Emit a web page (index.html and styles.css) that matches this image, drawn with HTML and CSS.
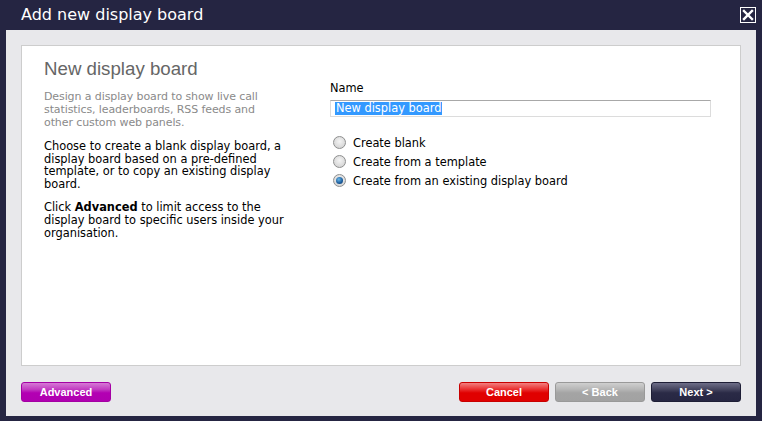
FILE: index.html
```html
<!DOCTYPE html>
<html>
<head>
<meta charset="utf-8">
<link rel="stylesheet" href="styles.css">
</head>
<body>
<div class="dialog">
  <div class="titlebar">
    <span class="title">Add new display board</span>
    <span class="close"><svg width="14" height="14" viewBox="0 0 14 14"><path d="M3 3 L11 11 M11 3 L3 11" stroke="#fff" stroke-width="2.4" stroke-linecap="square"/></svg></span>
  </div>
  <div class="body">
    <div class="panel">
      <div class="left">
        <h1 class="heading">New display board</h1>
        <p class="desc">Design a display board to show live call statistics, leaderboards, RSS feeds and other custom web panels.</p>
        <p class="text">Choose to create a blank display board, a display board based on a pre-defined template, or to copy an existing display board.</p>
        <p class="text">Click <strong class="strong">Advanced</strong> to limit access to the display board to specific users inside your organisation.</p>
      </div>
      <div class="right">
        <div class="label">Name</div>
        <div class="input"><span class="sel">New display board</span></div>
        <div class="radios">
          <div class="radio-row"><span class="radio"></span><span>Create blank</span></div>
          <div class="radio-row"><span class="radio"></span><span>Create from a template</span></div>
          <div class="radio-row"><span class="radio checked"></span><span>Create from an existing display board</span></div>
        </div>
      </div>
    </div>
    <div class="buttons">
      <span class="btn advanced">Advanced</span>
      <div class="btn-group">
        <span class="btn cancel">Cancel</span>
        <span class="btn back">&lt; Back</span>
        <span class="btn next">Next &gt;</span>
      </div>
    </div>
  </div>
</div>
</body>
</html>
```

FILE: styles.css
```css
html, body {
  margin: 0;
  padding: 0;
  background: #252542;
}
.dialog {
  width: 762px;
  height: 421px;
  display: flex;
  flex-direction: column;
  font-family: "DejaVu Sans", Verdana, sans-serif;
}
.titlebar {
  height: 30px;
  display: flex;
  align-items: center;
  justify-content: space-between;
  padding: 0 6px 0 21px;
}
.title {
  color: #fff;
  font-size: 16px;
  line-height: 30px;
}
.close {
  width: 14px;
  height: 14px;
  border: 1px solid #fff;
  display: flex;
  margin-top: -1px;
}
.body {
  margin: 0 6px;
  height: 386px;
  background: #e8e8eb;
  padding: 15px 15px 0 15px;
  box-sizing: border-box;
}
.panel {
  height: 321px;
  box-sizing: border-box;
  background: #fff;
  border: 1px solid #cdcdcd;
  display: flex;
  padding: 12px 29px 0 22px;
}
.left {
  width: 258px;
}
.heading {
  margin: 0;
  font-family: "Liberation Sans", Arial, sans-serif;
  font-weight: normal;
  font-size: 18.7px;
  line-height: 22px;
  color: #666;
}
.desc {
  width: 232px;
  font-size: 11px;
  letter-spacing: -0.1px;
  line-height: 13px;
  color: #8a8a8a;
  margin: 10px 0 0 0;
}
.text {
  font-size: 11.4px;
  line-height: 12.6px;
  color: #000;
  margin: 11px 0 0 0;
}
.strong {
  font-weight: bold;
}
.right {
  margin-left: 28px;
  flex: 1;
  padding-top: 24px;
  font-size: 11.4px;
  color: #000;
}
.label {
  line-height: 13px;
}
.input {
  margin-top: 5px;
  height: 17px;
  box-sizing: border-box;
  border: 1px solid #dcdcdc;
  border-top-color: #a8a8a8;
  padding: 1px 0 0 5px;
  line-height: 13px;
}
.sel {
  background: #3399ff;
  color: #fff;
  display: inline-block;
  line-height: 13px;
  padding: 0 1px;
  margin-left: -1px;
}
.radios {
  margin-top: 16px;
}
.radio-row {
  display: flex;
  align-items: center;
  height: 19px;
  gap: 7px;
  padding-left: 3px;
}
.radio {
  width: 13px;
  height: 13px;
  box-sizing: border-box;
  border-radius: 50%;
  border: 1px solid #8e8f8f;
  background: radial-gradient(circle at 50% 40%, #f4f4f4 0%, #dcdcdc 60%, #cfcfcf 100%);
  display: flex;
  align-items: center;
  justify-content: center;
}
.radio.checked::after {
  content: "";
  width: 7px;
  height: 7px;
  border-radius: 50%;
  background: radial-gradient(circle at 40% 35%, #6ab8e8 0%, #1a5a9a 60%, #0c3460 100%);
}
.buttons {
  margin-top: 16px;
  display: flex;
  justify-content: space-between;
}
.btn-group {
  display: flex;
  gap: 6px;
}
.btn {
  width: 90px;
  height: 20px;
  box-sizing: border-box;
  border-radius: 3px;
  display: flex;
  align-items: center;
  justify-content: center;
  font-family: "Liberation Sans", Arial, sans-serif;
  font-weight: bold;
  font-size: 11px;
  color: #fff;
  border: 1px solid transparent;
}
.advanced {
  background: linear-gradient(#d57ad5 0%, #c23dc2 35%, #b300b3 55%, #b000b0 100%);
  border-color: #a400a4;
}
.cancel {
  background: linear-gradient(#f28080 0%, #ea3030 35%, #e00000 55%, #e00000 100%);
  border-color: #c80000;
}
.back {
  background: linear-gradient(#cfcfcf 0%, #b6b6b6 35%, #a4a4a4 55%, #a2a2a2 100%);
  border-color: #999;
}
.next {
  background: linear-gradient(#6e6e88 0%, #45455f 35%, #2a2a46 55%, #262642 100%);
  border-color: #1e1e36;
}
```
